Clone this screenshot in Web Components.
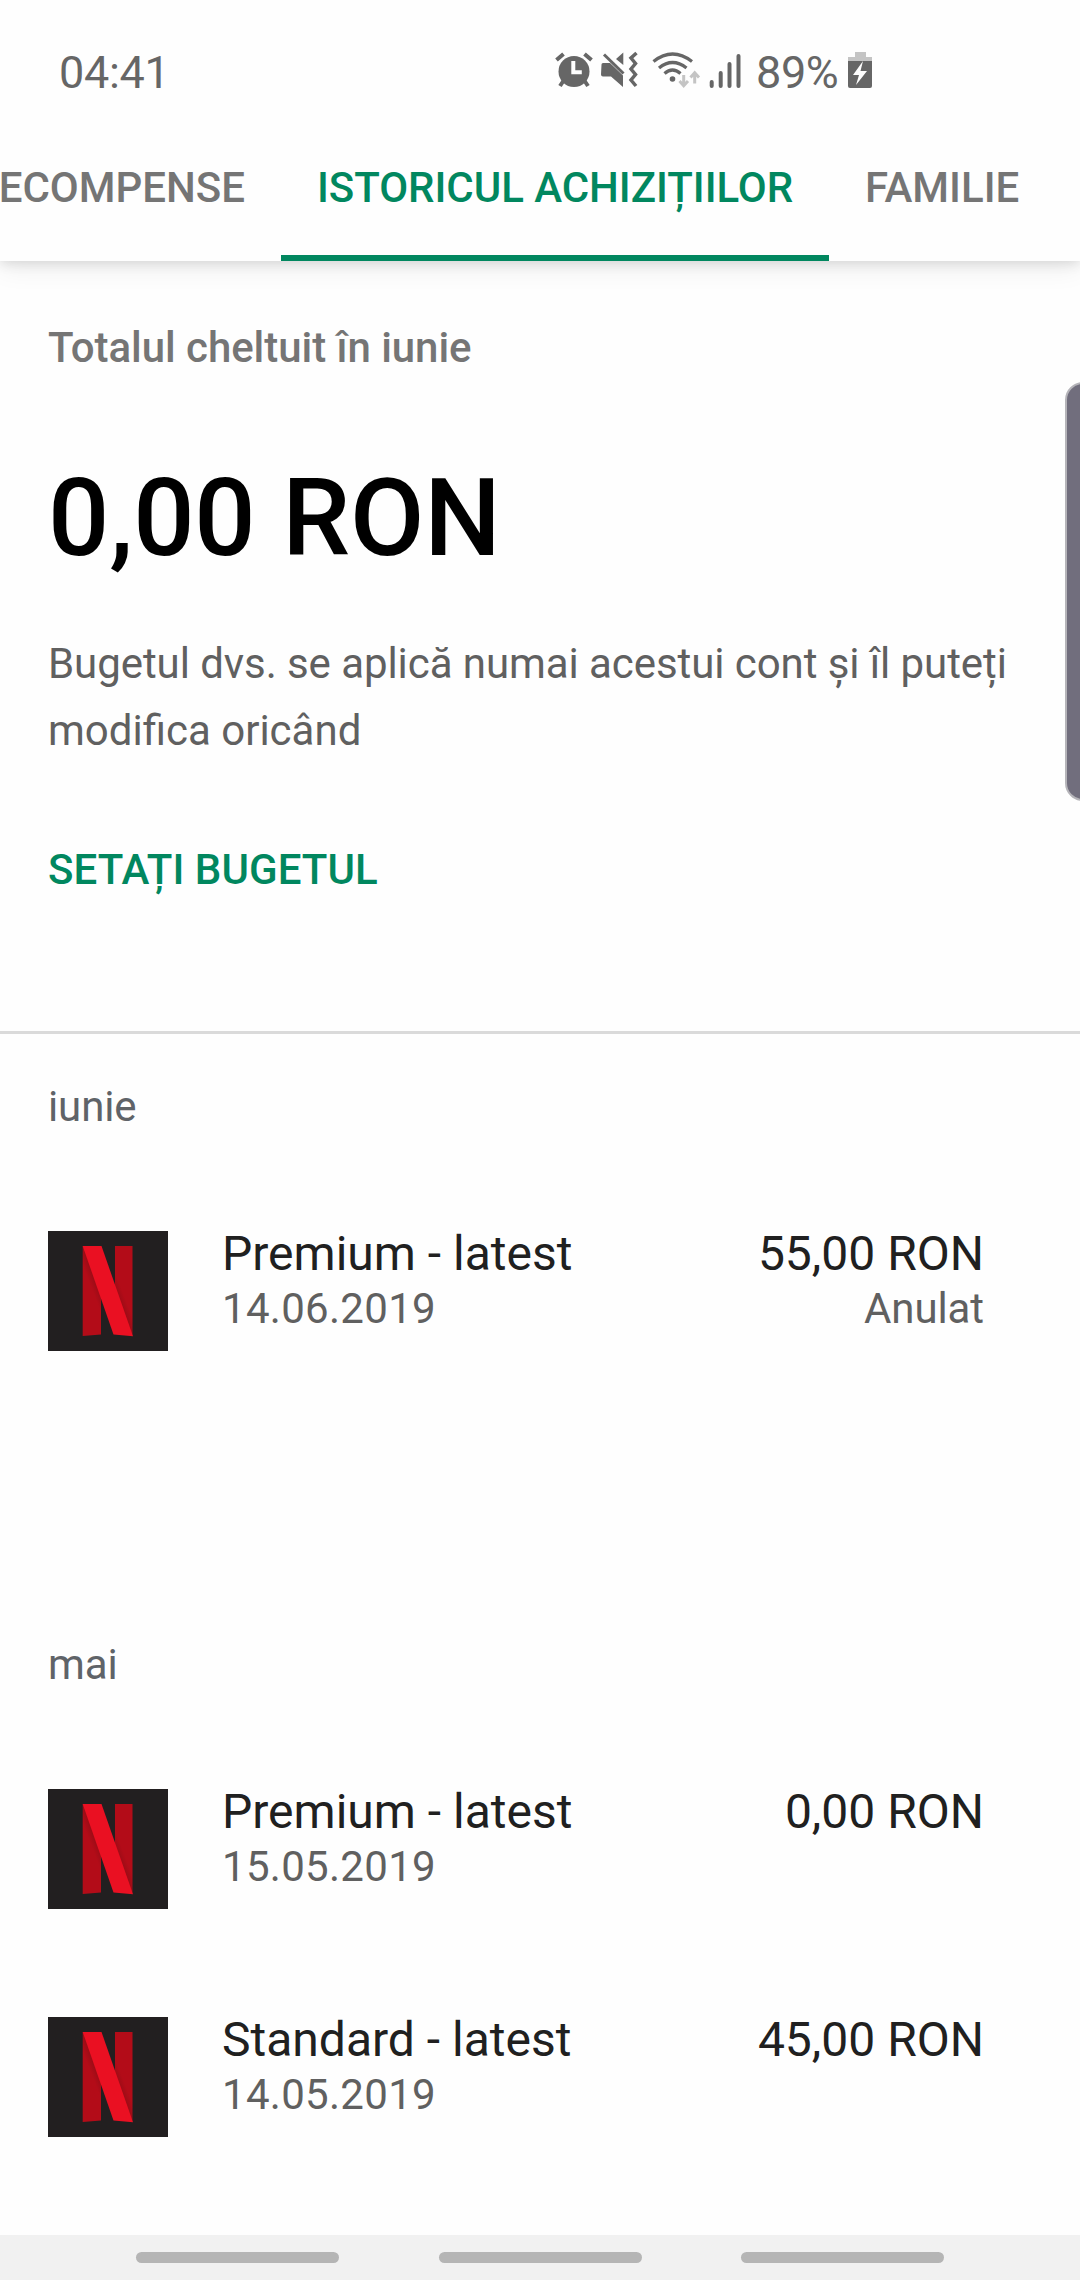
<!DOCTYPE html>
<html lang="ro">
<head>
<meta charset="utf-8">
<title>Istoricul achizițiilor</title>
<style>
body{margin:0;background:#fefefe;font-family:Roboto,"Liberation Sans",sans-serif;overflow:hidden}
</style>
</head>
<body>
<purchase-app></purchase-app>
<script>
const define=(name,html)=>customElements.define(name,class extends HTMLElement{
  constructor(){
    super();
    const t=document.createElement('template');
    t.innerHTML=html;
    this.attachShadow({mode:'open'}).append(t.content.cloneNode(true));
  }
});

define('status-bar',`
<style>
:host{display:flex;align-items:flex-start;height:114px;box-sizing:border-box;color:#666;font-size:45px;line-height:53px;padding-left:59px}
span{margin-top:46px;white-space:nowrap}
.time{width:481px;letter-spacing:-.3px}
.icons{flex:none;margin-top:40px;width:216px;height:60px}
.pct{width:92px;letter-spacing:-.4px}
.bat{flex:none;margin-top:40px;width:40px;height:60px}
</style>
<span class="time">04:41</span>
<svg class="icons" viewBox="0 0 216 60" fill="none" stroke="#666">
  <circle cx="34" cy="31.5" r="15.5" fill="#666" stroke="none"/>
  <path d="M16.500 20l7-6M51.500 20l-7-6" stroke-width="4"/>
  <path d="M24 40l-4 6M44 40l4 6" stroke-width="4"/>
  <path d="M33.300 21v11.300h8.500" stroke="#fefefe" stroke-width="4"/>
  <path d="M61.500 24.500q0-1.500 1.500-1.500h7l13 12.500V47L71 36.500h-8q-2 0-2-2zM76 19l7.300-6.500V25z" fill="#666" stroke="none"/>
  <path d="M64 14.500l19.500 19" stroke-width="3"/>
  <path d="M96.500 13l-5.500 5 4.500 5.500-4.500 5.500 4.500 5.500-4.500 5.500 5 6" stroke-width="3.500"/>
  <path d="M113.500 21.500Q132.500 6.500 152 21.500M119 28Q132.500 17 146.500 28M124.500 33.500Q132.500 26.500 140.500 33.500" stroke-width="3.300"/>
  <circle cx="132.500" cy="39" r="2.800" fill="#666" stroke="none"/>
  <path d="M143.700 35v10M139.500 41l4.200 4.700 4.300-4.700M154.700 43.500v-10M150.500 37.500l4.200-4.700 4.300 4.700" stroke="#c4c4c4" stroke-width="3"/>
  <path d="M171.700 42v4M180.700 33v13M189.500 24v22M198.500 16v30" stroke-width="4" stroke-linecap="round"/>
</svg>
<span class="pct">89%</span>
<svg class="bat" viewBox="0 0 40 60">
  <path d="M7 12h11v5h6v5H0v-5h7z" fill="#c4c4c4"/>
  <path d="M0 21h24v25q0 2-2 2H2q-2 0-2-2z" fill="#666"/>
  <path d="M15 21L5 35h6L8 45l11-14h-6.500z" fill="#fefefe"/>
</svg>`);

define('tab-item',`
<style>
:host{flex:none;display:flex;flex-direction:column;box-sizing:border-box;height:147px;padding:0 36px;font-size:42px;font-weight:500;line-height:50px;color:#757575;white-space:nowrap;border-bottom:6px solid transparent}
:host([active]){color:#01875f;border-bottom-color:#01875f}
div{margin-top:49px}
</style><div><slot></slot></div>`);

define('tab-bar',`
<style>
:host{display:flex;height:147px;background:#fefefe;box-shadow:0 6px 26px rgba(0,0,0,.08),0 2px 12px rgba(0,0,0,.12);clip-path:inset(0 0 -50px 0)}
.first{width:281px;box-sizing:border-box;align-items:flex-end}
.active{width:548px;box-sizing:border-box;letter-spacing:-.04px}
</style>
<tab-item class="first">ECOMPENSE</tab-item>
<tab-item class="active" active>ISTORICUL ACHIZIȚIILOR</tab-item>
<tab-item>FAMILIE</tab-item>`);

define('budget-summary',`
<style>
:host{display:flex;flex-direction:column;box-sizing:border-box;height:773px;padding:62px 48px 0;border-bottom:3px solid #dadada}
.label{font-size:42px;font-weight:500;line-height:50px;color:#757575;letter-spacing:-.05px}
.total{font-size:108px;font-weight:500;line-height:126px;color:#000;margin-top:82px;letter-spacing:-.2px}
p{margin:49px -20px 0 0;font-size:42px;line-height:67px;color:#606060;letter-spacing:-.07px;font-variant-ligatures:common-ligatures}
.action{margin-top:81px;font-size:42px;font-weight:500;line-height:50px;color:#01875f;letter-spacing:.06px}
</style>
<div class="label">Totalul cheltuit în iunie</div>
<div class="total">0,00 RON</div>
<p>Bugetul dvs. se aplică numai acestui cont și îl puteți<br><span style="letter-spacing:0">modifica oricând</span></p>
<div class="action">SETAȚI BUGETUL</div>`);

define('netflix-icon',`
<style>:host{display:block;flex:none;width:120px;height:120px}svg{display:block}</style>
<svg width="120" height="120" viewBox="0 0 120 120">
  <defs>
    <linearGradient id="l" gradientUnits="userSpaceOnUse" x1="35" y1="62" x2="53" y2="55"><stop offset=".5" stop-color="#b30c18"/><stop offset="1" stop-color="#8f0c15"/></linearGradient>
    <linearGradient id="r" gradientUnits="userSpaceOnUse" x1="84" y1="58" x2="66" y2="65"><stop offset=".5" stop-color="#b30c18"/><stop offset="1" stop-color="#8f0c15"/></linearGradient>
  </defs>
  <rect width="120" height="120" fill="#221f20"/>
  <path d="M34.700 15H53v88.500l-18.300 1.500z" fill="url(#l)"/>
  <path d="M67 15h17.500v89L67 74z" fill="url(#r)"/>
  <path d="M34.700 15h18.800L85 105.300l-19.500-1.800z" fill="#ea1022"/>
</svg>`);

define('month-group',`
<style>
:host{display:block;box-sizing:border-box}
h2{margin:0;padding:48px 48px 0;font-size:42px;font-weight:400;line-height:50px;color:#5f6368;letter-spacing:-.1px}
.rows{display:flex;flex-direction:column;gap:108px;padding-top:99px}
</style>
<h2><slot name="month"></slot></h2><div class="rows"><slot></slot></div>`);

define('purchase-row',`
<style>
:host{display:flex;height:120px;padding:0 96px 0 48px;color:#202020;font-size:48px;line-height:56px}
.main{flex:1;margin-left:54px}
.side{text-align:right}
.main,.side{display:flex;flex-direction:column;margin-top:-5px}
.sub{font-size:42px;line-height:50px;margin-top:2px;color:#606060}
.main .sub{letter-spacing:.3px}
.side .sub{letter-spacing:-.1px}
</style>
<netflix-icon></netflix-icon>
<div class="main"><div><slot name="title"></slot></div><div class="sub"><slot name="date"></slot></div></div>
<div class="side"><div><slot name="price"></slot></div><div class="sub"><slot name="state"></slot></div></div>`);

define('nav-bar',`
<style>
:host{display:flex;align-items:flex-start;gap:100px;height:45px;box-sizing:border-box;padding:17px 0 0 136px;background:#f1f1f1}
i{width:203px;height:11px;border-radius:5.500px;background:#b5b5b5}
i+i{margin-left:-.5px}
</style><i></i><i></i><i></i>`);

define('edge-handle',`
<style>
:host{display:block;position:absolute;left:1065px;top:382px;width:40px;height:419px;box-sizing:border-box;border:2px solid #b5b4b9;border-radius:18px;background:#716e7d}
</style>`);

define('purchase-app',`
<style>
:host{display:flex;flex-direction:column;position:relative;width:1080px;height:2280px;overflow:hidden;background:#fefefe}
tab-bar{flex:none;position:relative;z-index:1}
status-bar,budget-summary,month-group,nav-bar{flex:none}
.june{height:558px}
.may{flex:1}
</style>
<status-bar></status-bar>
<tab-bar></tab-bar>
<budget-summary></budget-summary>
<month-group class="june"><span slot="month">iunie</span>
<purchase-row><span slot="title">Premium - latest</span><span slot="date">14.06.2019</span><span slot="price">55,00 RON</span><span slot="state">Anulat</span></purchase-row>
</month-group>
<month-group class="may"><span slot="month">mai</span>
<purchase-row><span slot="title">Premium - latest</span><span slot="date">15.05.2019</span><span slot="price">0,00 RON</span></purchase-row>
<purchase-row><span slot="title">Standard - latest</span><span slot="date">14.05.2019</span><span slot="price">45,00 RON</span></purchase-row>
</month-group>
<nav-bar></nav-bar>
<edge-handle></edge-handle>`);
</script>
</body>
</html>
